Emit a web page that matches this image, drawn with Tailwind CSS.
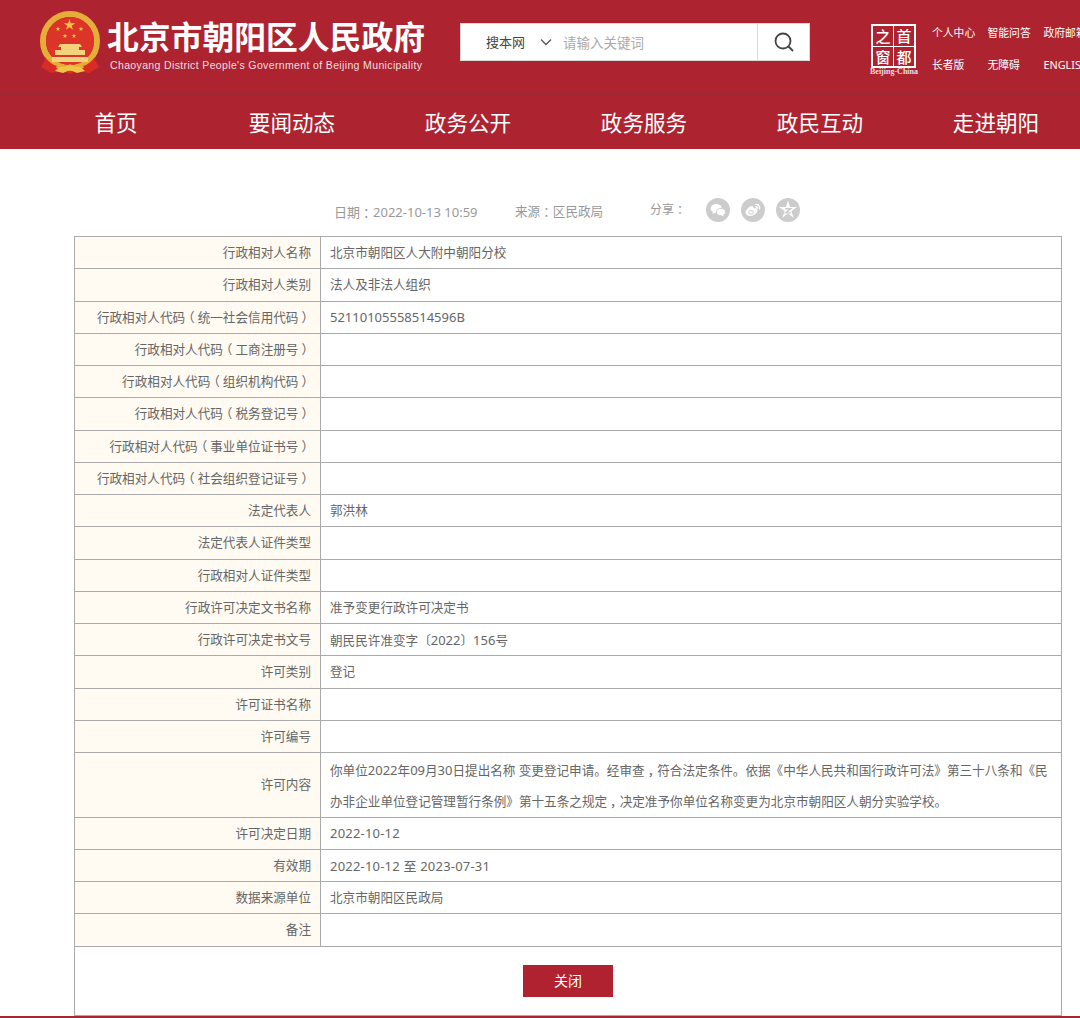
<!DOCTYPE html>
<html lang="zh-CN">
<head>
<meta charset="UTF-8">
<title>北京市朝阳区人民政府</title>
<script src="https://cdn.jsdelivr.net/npm/@tailwindcss/browser@4"></script>
</head>
<body class="h-[1018px] w-[1080px] overflow-hidden bg-white font-['Noto_Sans','Noto_Sans_CJK_SC',sans-serif] text-[12.6px] text-[#666]">

<header class="bg-[#ae2330] text-white">
  <div class="flex h-[94px] border-b border-[#962a35] box-content">
    <!-- emblem -->
    <svg class="ml-[39px] mt-[11px] h-[64px] w-[62px] shrink-0" viewBox="0 0 62 64">
      <defs><polygon id="star" points="0,-1 .225,-.309 .951,-.309 .363,.118 .588,.809 0,.382 -.588,.809 -.363,.118 -.951,-.309 -.225,-.309"/></defs>
      <path d="M8 46 L2 56 L12 62 L24 60 L31 63 L38 60 L50 62 L60 56 L54 46Z" fill="#d92c24"/>
      <circle cx="31" cy="30" r="27" fill="none" stroke="#e6ae38" stroke-width="6"/>
      <circle cx="31" cy="30" r="24" fill="#dc3429"/>
      <g fill="#f1c445">
        <use href="#star" transform="translate(30.500 14) scale(6)"/>
        <use href="#star" transform="translate(19 18) scale(2.600)"/>
        <use href="#star" transform="translate(42 18) scale(2.600)"/>
        <use href="#star" transform="translate(26 25) scale(2.600)"/>
        <use href="#star" transform="translate(35 25) scale(2.600)"/>
      </g>
      <path d="M21 33h20l2 3h-3v3h6v5H16v-5h6v-3h-3z" fill="#f3d27c"/>
      <rect x="13" y="46" width="36" height="5" fill="#f3d27c"/>
      <path d="M16 60c3-4 7-5 10-4l5-3 5 3c3-1 7 0 10 4l-8 2-7-3-7 3z" fill="#f1c445"/>
      <path d="M6 46c4 5 8 8 12 9l-4 5-8-3z M56 46c-4 5-8 8-12 9l4 5 8-3z" fill="#d92c24"/>
    </svg>
    <div class="ml-[6px] w-[353px] shrink-0">
      <div class="mt-[16px] h-[38px] text-[31.800px] leading-[38px] font-bold whitespace-nowrap font-['Noto_Sans_CJK_SC',sans-serif]">北京市朝阳区人民政府</div>
      <div class="ml-[3px] mt-[3px] font-['Liberation_Sans',sans-serif] text-[10.500px] leading-[16px] tracking-[0.36px] whitespace-nowrap text-[#f3dfe1]">Chaoyang District People's Government of Beijing Municipality</div>
    </div>
    <!-- search -->
    <div class="mt-[23px] flex h-[38px] w-[350px] shrink-0 items-center border border-[#d9d9d9] bg-white">
      <span class="ml-[25px] mt-[2px] w-[42px] text-[13px] text-[#444]">搜本网</span>
      <svg class="ml-[11px] h-[9px] w-[14px]" viewBox="0 0 14 9" fill="none" stroke="#555" stroke-width="1.300"><path d="M2 1.500 7 6.500 12 1.500"/></svg>
      <span class="ml-[10px] mt-[2px] w-[194px] text-[13.500px] text-[#aaa]">请输入关键词</span>
      <div class="flex h-full flex-1 items-center justify-center border-l border-[#d9d9d9]">
        <svg class="h-[22px] w-[22px]" viewBox="0 0 22 22" fill="none" stroke="#444" stroke-width="1.800"><circle cx="10" cy="10" r="7.500"/><path d="M15.500 15.500 20 20"/></svg>
      </div>
    </div>
    <!-- shoudu zhi chuang logo -->
    <div class="ml-[60px] mt-[24px] w-[48px] shrink-0">
      <div class="ml-[1px] grid h-[44px] w-[45px] grid-cols-2 grid-rows-2 gap-[1px] border-2 border-white bg-white font-['Noto_Sans_CJK_SC',serif] text-[15px] leading-none font-medium">
        <span class="flex items-center justify-center bg-[#ae2330]">之</span>
        <span class="flex items-center justify-center bg-[#ae2330]">首</span>
        <span class="flex items-center justify-center bg-[#ae2330]">窗</span>
        <span class="flex items-center justify-center bg-[#ae2330]">都</span>
      </div>
      <div class="whitespace-nowrap text-center font-['Liberation_Serif',serif] text-[8px] leading-[8px] font-bold text-[#f3dfe1]">Beijing-China</div>
    </div>
    <!-- top links -->
    <div class="ml-[14px] mt-[23px] grid shrink-0 grid-cols-[55.500px_56px_60px] grid-rows-[20px_20px] gap-y-[12px] text-[10.800px] leading-[20px] whitespace-nowrap">
      <a>个人中心</a><a>智能问答</a><a>政府邮箱</a>
      <a>长者版</a><a>无障碍</a><a>ENGLISH</a>
    </div>
  </div>
  <nav class="ml-[28px] flex h-[54px] w-[1056px] items-center pt-[2px] text-center text-[21.600px] leading-[52px]">
    <a class="w-[176px] shrink-0">首页</a>
    <a class="w-[176px] shrink-0">要闻动态</a>
    <a class="w-[176px] shrink-0">政务公开</a>
    <a class="w-[176px] shrink-0">政务服务</a>
    <a class="w-[176px] shrink-0">政民互动</a>
    <a class="w-[176px] shrink-0">走进朝阳</a>
  </nav>
</header>

<main class="ml-[74px] w-[988px]">
  <!-- article meta -->
  <div class="flex h-[87px] items-center pt-[40px] pl-[260px] text-[#999]">
    <span class="w-[181px] text-[13px] whitespace-nowrap">日期<span class="relative left-[3px]">：</span>2022-10-13 10:59</span>
    <span class="w-[135px] whitespace-nowrap">来源<span class="relative left-[3px]">：</span>区民政局</span>
    <span class="-mt-[5px] w-[56px] text-[12px] whitespace-nowrap">分享<span class="relative left-[3px]">：</span></span>
    <div class="-mt-[5px] flex gap-[11px]">
      <span class="flex h-[24px] w-[24px] items-center justify-center rounded-full bg-[#ccc]">
        <svg class="h-[16px] w-[16px]" viewBox="0 0 16 16" fill="#fff"><ellipse cx="6.200" cy="6.500" rx="5.500" ry="4.500"/><path d="M3 9.500 2.500 12 5.500 10.500z"/><ellipse cx="11" cy="10" rx="4.500" ry="3.600" stroke="#ccc" stroke-width=".8"/><path d="M13 12.500 13.800 14.500 11 13.200z"/></svg>
      </span>
      <span class="flex h-[24px] w-[24px] items-center justify-center rounded-full bg-[#ccc]">
        <svg class="h-[16px] w-[16px]" viewBox="0 0 16 16" fill="none" stroke="#fff"><path d="M1 10.500C1 7.500 5 4 7.500 4.500 8.500 5 8 6.500 8 7c2-.8 4-.5 4 1 0 3-3.500 5.500-6.500 5.500S1 12.500 1 10.500z" fill="#fff"/><ellipse cx="6" cy="10.300" rx="2.300" ry="1.800" stroke="#ccc" stroke-width="1"/><path d="M10.500 2.500c2.500-.5 5 1.500 4 5M10.500 4.800c1.300-.3 2.300.7 2 2" stroke-width="1.300"/></svg>
      </span>
      <span class="flex h-[24px] w-[24px] items-center justify-center rounded-full bg-[#ccc]">
        <svg class="h-[20px] w-[20px]" viewBox="-9 -9 18 18"><use href="#star" transform="scale(8.500)" fill="#fff"/><path d="M-2.500 -1.200H2.500L-2 2.600H2.800" fill="none" stroke="#ccc" stroke-width="1.300"/></svg>
      </span>
    </div>
  </div>

  <!-- detail table -->
  <div class="border-x border-t border-[#aaa]">
    <div class="grid h-[32.25px] grid-cols-[246px_1fr] border-b border-[#aaa]"><div class="flex items-center justify-end border-r border-[#aaa] bg-[#fffaf2] pr-[9px] pt-[2px]">行政相对人名称</div><div class="flex items-center pl-[9px] pt-[2px]">北京市朝阳区人大附中朝阳分校</div></div>
    <div class="grid h-[32.25px] grid-cols-[246px_1fr] border-b border-[#aaa]"><div class="flex items-center justify-end border-r border-[#aaa] bg-[#fffaf2] pr-[9px] pt-[2px]">行政相对人类别</div><div class="flex items-center pl-[9px] pt-[2px]">法人及非法人组织</div></div>
    <div class="grid h-[32.25px] grid-cols-[246px_1fr] border-b border-[#aaa]"><div class="flex items-center justify-end border-r border-[#aaa] bg-[#fffaf2] pr-[9px] pt-[2px]"><span>行政相对人代码<span class="relative -left-[3px]">（</span>统一社会信用代码<span class="relative left-[3px]">）</span></span></div><div class="flex items-center pl-[9px] pt-[2px] text-[13px]">52110105558514596B</div></div>
    <div class="grid h-[32.25px] grid-cols-[246px_1fr] border-b border-[#aaa]"><div class="flex items-center justify-end border-r border-[#aaa] bg-[#fffaf2] pr-[9px] pt-[2px]"><span>行政相对人代码<span class="relative -left-[3px]">（</span>工商注册号<span class="relative left-[3px]">）</span></span></div><div></div></div>
    <div class="grid h-[32.25px] grid-cols-[246px_1fr] border-b border-[#aaa]"><div class="flex items-center justify-end border-r border-[#aaa] bg-[#fffaf2] pr-[9px] pt-[2px]"><span>行政相对人代码<span class="relative -left-[3px]">（</span>组织机构代码<span class="relative left-[3px]">）</span></span></div><div></div></div>
    <div class="grid h-[32.25px] grid-cols-[246px_1fr] border-b border-[#aaa]"><div class="flex items-center justify-end border-r border-[#aaa] bg-[#fffaf2] pr-[9px] pt-[2px]"><span>行政相对人代码<span class="relative -left-[3px]">（</span>税务登记号<span class="relative left-[3px]">）</span></span></div><div></div></div>
    <div class="grid h-[32.25px] grid-cols-[246px_1fr] border-b border-[#aaa]"><div class="flex items-center justify-end border-r border-[#aaa] bg-[#fffaf2] pr-[9px] pt-[2px]"><span>行政相对人代码<span class="relative -left-[3px]">（</span>事业单位证书号<span class="relative left-[3px]">）</span></span></div><div></div></div>
    <div class="grid h-[32.25px] grid-cols-[246px_1fr] border-b border-[#aaa]"><div class="flex items-center justify-end border-r border-[#aaa] bg-[#fffaf2] pr-[9px] pt-[2px]"><span>行政相对人代码<span class="relative -left-[3px]">（</span>社会组织登记证号<span class="relative left-[3px]">）</span></span></div><div></div></div>
    <div class="grid h-[32.25px] grid-cols-[246px_1fr] border-b border-[#aaa]"><div class="flex items-center justify-end border-r border-[#aaa] bg-[#fffaf2] pr-[9px] pt-[2px]">法定代表人</div><div class="flex items-center pl-[9px] pt-[2px]">郭洪林</div></div>
    <div class="grid h-[32.25px] grid-cols-[246px_1fr] border-b border-[#aaa]"><div class="flex items-center justify-end border-r border-[#aaa] bg-[#fffaf2] pr-[9px] pt-[2px]">法定代表人证件类型</div><div></div></div>
    <div class="grid h-[32.25px] grid-cols-[246px_1fr] border-b border-[#aaa]"><div class="flex items-center justify-end border-r border-[#aaa] bg-[#fffaf2] pr-[9px] pt-[2px]">行政相对人证件类型</div><div></div></div>
    <div class="grid h-[32.25px] grid-cols-[246px_1fr] border-b border-[#aaa]"><div class="flex items-center justify-end border-r border-[#aaa] bg-[#fffaf2] pr-[9px] pt-[2px]">行政许可决定文书名称</div><div class="flex items-center pl-[9px] pt-[2px]">准予变更行政许可决定书</div></div>
    <div class="grid h-[32.25px] grid-cols-[246px_1fr] border-b border-[#aaa]"><div class="flex items-center justify-end border-r border-[#aaa] bg-[#fffaf2] pr-[9px] pt-[2px]">行政许可决定书文号</div><div class="flex items-center pl-[9px] pt-[2px]"><span>朝民民许准变字〔<span class="text-[13px]">2022</span>〕<span class="text-[13px]">156</span>号</span></div></div>
    <div class="grid h-[32.25px] grid-cols-[246px_1fr] border-b border-[#aaa]"><div class="flex items-center justify-end border-r border-[#aaa] bg-[#fffaf2] pr-[9px] pt-[2px]">许可类别</div><div class="flex items-center pl-[9px] pt-[2px]">登记</div></div>
    <div class="grid h-[32.25px] grid-cols-[246px_1fr] border-b border-[#aaa]"><div class="flex items-center justify-end border-r border-[#aaa] bg-[#fffaf2] pr-[9px] pt-[2px]">许可证书名称</div><div></div></div>
    <div class="grid h-[32.25px] grid-cols-[246px_1fr] border-b border-[#aaa]"><div class="flex items-center justify-end border-r border-[#aaa] bg-[#fffaf2] pr-[9px] pt-[2px]">许可编号</div><div></div></div>
    <div class="grid h-[64.5px] grid-cols-[246px_1fr] grid-rows-[63.5px] border-b border-[#aaa]"><div class="flex items-center justify-end border-r border-[#aaa] bg-[#fffaf2] pr-[9px] pt-[2px]">许可内容</div><div class="px-[9px] pt-[2px] leading-[31px]">你单位<span class="text-[13px]">2022</span>年<span class="text-[13px]">09</span>月<span class="text-[13px]">30</span>日提出名称 变更登记申请。经审查<span class="relative left-[3px]">，</span>符合法定条件。依据《中华人民共和国行政许可法》第三十八条和《民办非企业单位登记管理暂行条例》第十五条之规定<span class="relative left-[3px]">，</span>决定准予你单位名称变更为北京市朝阳区人朝分实验学校。</div></div>
    <div class="grid h-[32.25px] grid-cols-[246px_1fr] border-b border-[#aaa]"><div class="flex items-center justify-end border-r border-[#aaa] bg-[#fffaf2] pr-[9px] pt-[2px]">许可决定日期</div><div class="flex items-center pl-[9px] pt-[2px] text-[13px] tracking-[0.2px]">2022-10-12</div></div>
    <div class="grid h-[32.25px] grid-cols-[246px_1fr] border-b border-[#aaa]"><div class="flex items-center justify-end border-r border-[#aaa] bg-[#fffaf2] pr-[9px] pt-[2px]">有效期</div><div class="flex items-center pl-[9px] pt-[2px] text-[13px] tracking-[0.2px]">2022-10-12 至 2023-07-31</div></div>
    <div class="grid h-[32.25px] grid-cols-[246px_1fr] border-b border-[#aaa]"><div class="flex items-center justify-end border-r border-[#aaa] bg-[#fffaf2] pr-[9px] pt-[2px]">数据来源单位</div><div class="flex items-center pl-[9px] pt-[2px]">北京市朝阳区民政局</div></div>
    <div class="grid h-[32.25px] grid-cols-[246px_1fr] border-b border-[#aaa]"><div class="flex items-center justify-end border-r border-[#aaa] bg-[#fffaf2] pr-[9px] pt-[2px]">备注</div><div></div></div>
    <div class="flex h-[69px] justify-center border-b border-[#aaa] pt-[18px]">
      <button class="h-[32px] w-[90px] bg-[#b0222f] text-[14px] text-white">关闭</button>
    </div>
  </div>
</main>
<footer class="h-[2px] bg-[#ae2330]"></footer>
</body>
</html>
